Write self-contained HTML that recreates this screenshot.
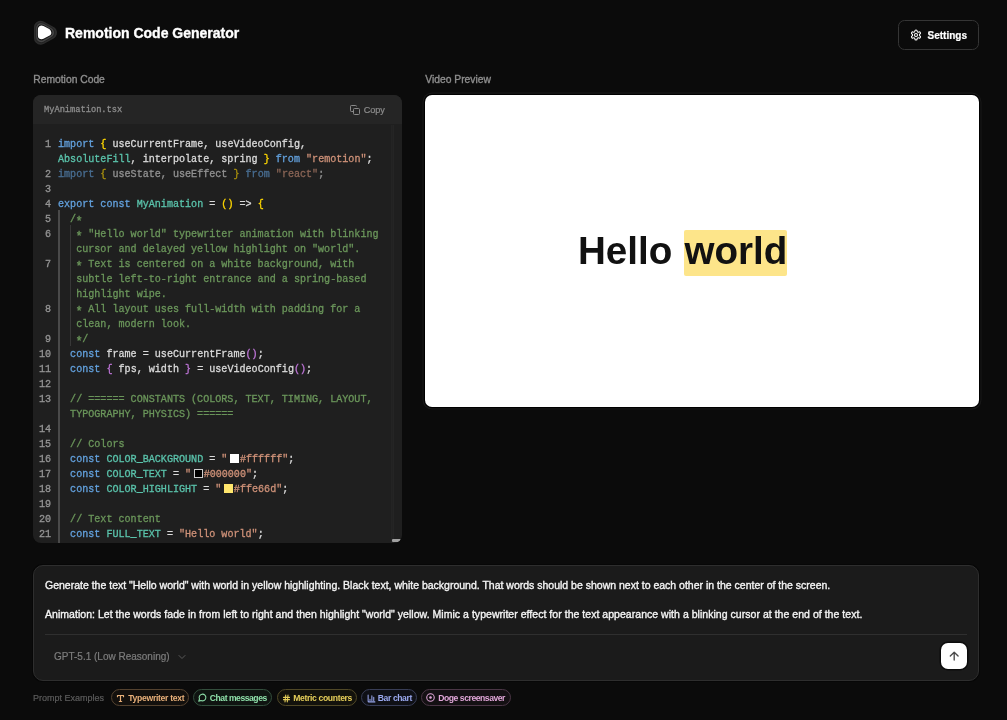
<!DOCTYPE html>
<html><head><meta charset="utf-8">
<style>
*{margin:0;padding:0;box-sizing:border-box}
html,body{width:1007px;height:720px;overflow:hidden;background:#0b0b0b;-webkit-font-smoothing:antialiased;}
body{will-change:transform;font-family:"Liberation Sans",sans-serif;color:#fff}
.abs{position:absolute}
#logo{left:30px;top:16px;width:30px;height:32px}
#title{left:65px;top:23px;font-size:14px;font-weight:bold;color:#fff;-webkit-text-stroke:0.35px #fff;line-height:20px;white-space:nowrap}
#settings{left:898px;top:20px;width:81px;height:30px;border:1.6px solid #353535;border-radius:6.5px;background:#0b0b0b}
#settings span{position:absolute;left:28.5px;top:9.2px;font-size:10px;font-weight:bold;line-height:12px;color:#fff;-webkit-text-stroke:0.2px #fff}
#settings svg{position:absolute;left:10.5px;top:7.5px}
.label{font-size:10.3px;font-weight:normal;color:#8e8e8e;line-height:12px;white-space:nowrap;-webkit-text-stroke:0.35px currentColor}
#code{left:33px;top:95px;width:369px;height:448px;background:#1f1f1f;border-radius:8px;overflow:hidden}
#codehead{position:absolute;left:0;top:0;width:369px;height:29.4px;background:#252525}
#fname{position:absolute;left:11px;top:8.8px;font-family:"Liberation Mono",monospace;font-size:8.7px;color:#8c8c8c;line-height:12px;-webkit-text-stroke:0.3px currentColor}
#copy{position:absolute;left:330.7px;top:8.6px;font-size:9.1px;color:#8c8c8c;-webkit-text-stroke:0.2px currentColor;line-height:12px}
#copy svg{position:absolute;left:-13.5px;top:1.3px}
#scrolltrack{position:absolute;left:358px;top:30px;width:3px;height:418px;background:#222;border-left:1px solid #242424;border-right:1px solid #252525}
#scrollthumb{position:absolute;left:359px;top:444px;width:9px;height:3px;background:#a0a0a0;border-radius:1px}
#lines{position:absolute;left:0;top:41.8px;width:359px;font-family:"Liberation Mono",monospace;font-size:10.08px;line-height:15.03px;color:#dadada}
.tx,.ln{white-space:pre;-webkit-text-stroke:0.3px currentColor}
.r{height:15.03px;position:relative}
.ln{position:absolute;left:0;width:18px;text-align:right;color:#959595}
.tx{position:absolute;left:25px}
.k{color:#62a0dc}.y{color:#ffd700}.p{color:#bd74d6}.t{color:#5ac3ab}.s{color:#ce9178}.c{color:#6a955a}
.dim .tx{opacity:.6}
#lines b{font-weight:normal}
.guide{position:absolute;width:1px;background:#404040}
.ast{display:inline-block;font-style:normal;transform:translateY(2.6px) scale(1.2)}
.sw{display:inline-block;width:9px;height:9px;border:1px solid #111;vertical-align:-1px;margin:0 1px 0 2.5px}
#video{left:425px;top:95px;width:554px;height:312px;background:#fff;border-radius:7px;box-shadow:0 0 0 1.3px #000,0 0 0 2.5px #181818}
#hello{position:absolute;left:0;top:0;width:554px;height:312px;font-size:38.6px;font-weight:bold;color:#111;line-height:44px}
#hw1{position:absolute;left:153px;top:134px}
#hw2{position:absolute;left:258.5px;top:135px;height:46px;width:103px;background:#fde58a;border-radius:2px;padding-left:1px;line-height:42px}
#prompt{left:33px;top:565px;width:946px;height:116px;background:#1b1b1b;border:1.3px solid #2e2e2e;border-radius:10px;box-shadow:0 0 0 1px #070707}
#ptext{position:absolute;left:11px;top:11.5px;font-size:10.5px;line-height:14.5px;color:#f4f4f4;white-space:pre;-webkit-text-stroke:0.35px currentColor}
#sep{position:absolute;left:11px;top:68px;width:922px;height:1px;background:#2f2f2f}
#model{position:absolute;left:20px;top:84px;font-size:10px;color:#7d7d7d;-webkit-text-stroke:0.2px currentColor;line-height:14px;white-space:nowrap}
#send{position:absolute;left:907px;top:76.5px;width:26.4px;height:26.6px;background:#fff;border-radius:7px;box-shadow:0 0 0 1.5px #0c0c0c}
#examples{left:33px;top:689px;height:16px;white-space:nowrap}
#exlabel{position:absolute;left:0;top:2.8px;font-size:9px;color:#5c5c5c;line-height:12px;-webkit-text-stroke:0.2px currentColor}
.chip{position:absolute;top:0;height:17px;border-radius:8.5px;border:1.2px solid;font-size:8.6px;font-weight:bold;line-height:12px}
.chip span{position:absolute;top:2px;white-space:nowrap}
.chip svg{position:absolute}
</style></head>
<body>
<!-- header -->
<svg class="abs" id="logo" width="30" height="32" viewBox="0 0 30 32"><path d="M10.50 11.20L10.50 22.20L20.50 16.70Z" fill="#2d2d2d" stroke="#2d2d2d" stroke-width="13.00" stroke-linejoin="round"/><path d="M11.00 11.80L11.00 21.60L19.60 16.70Z" fill="#232323" stroke="#232323" stroke-width="11.20" stroke-linejoin="round"/><path d="M11.20 12.20L11.20 21.20L19.00 16.70Z" fill="#474747" stroke="#474747" stroke-width="10.00" stroke-linejoin="round"/><path d="M11.40 12.90L11.40 20.10L18.10 16.50Z" fill="#151515" stroke="#151515" stroke-width="8.60" stroke-linejoin="round"/><path d="M11.70 13.40L11.70 19.50L17.40 16.45Z" fill="#ffffff" stroke="#ffffff" stroke-width="7.60" stroke-linejoin="round"/></svg>
<div class="abs" id="title">Remotion Code Generator</div>
<div class="abs" id="settings">
 <svg width="12" height="12" viewBox="0 0 24 24" fill="none" stroke="#fff" stroke-width="2.1" stroke-linecap="round" stroke-linejoin="round"><path d="M12.22 2h-.44a2 2 0 0 0-2 2v.18a2 2 0 0 1-1 1.73l-.43.25a2 2 0 0 1-2 0l-.15-.08a2 2 0 0 0-2.73.73l-.22.38a2 2 0 0 0 .73 2.730l.15.1a2 2 0 0 1 1 1.72v.51a2 2 0 0 1-1 1.74l-.15.09a2 2 0 0 0-.73 2.73l.22.38a2 2 0 0 0 2.73.73l.15-.08a2 2 0 0 1 2 0l.43.25a2 2 0 0 1 1 1.73V20a2 2 0 0 0 2 2h.44a2 2 0 0 0 2-2v-.18a2 2 0 0 1 1-1.73l.43-.25a2 2 0 0 1 2 0l.15.08a2 2 0 0 0 2.73-.73l.22-.39a2 2 0 0 0-.73-2.73l-.15-.08a2 2 0 0 1-1-1.74v-.5a2 2 0 0 1 1-1.740l.15-.09a2 2 0 0 0 .73-2.73l-.22-.38a2 2 0 0 0-2.73-.73l-.15.08a2 2 0 0 1-2 0l-.43-.25a2 2 0 0 1-1-1.73V4a2 2 0 0 0-2-2z"/><circle cx="12" cy="12" r="3"/></svg>
 <span>Settings</span>
</div>
<div class="abs label" style="left:33.3px;top:74.1px">Remotion Code</div>
<div class="abs label" style="left:425.3px;top:74.1px">Video Preview</div>

<!-- code panel -->
<div class="abs" id="code">
 <div id="codehead">
  <div id="fname">MyAnimation.tsx</div>
  <div id="copy"><svg width="10" height="10" viewBox="0 0 10 10" fill="none" stroke="#8a8a8a" stroke-width="1"><rect x="3.5" y="3.5" width="6" height="6" rx="1"/><path d="M6.5 1.5 V1.2 a0.8 0.8 0 0 0 -0.8 -0.7 H1.3 a0.8 0.8 0 0 0 -0.8 0.8 V5.7 a0.8 0.8 0 0 0 0.8 0.8 H3.5"/></svg>Copy</div>
 </div>
 <div id="scrolltrack"></div>
 <div id="scrollthumb"></div>
 <div id="lines">
  <div class="guide" style="left:25px;top:73px;height:340px;width:1.5px;background:#4a4a4a"></div>
  <div class="guide" style="left:37px;top:88px;height:121px;background:#383838"></div>
  <div class="r"><b class="ln">1</b><span class="tx"><b class="k">import</b> <b class="y">{</b> useCurrentFrame, useVideoConfig,</span></div>
  <div class="r"><span class="tx"><b class="t">AbsoluteFill</b>, interpolate, spring <b class="y">}</b> <b class="k">from</b> <b class="s">&quot;remotion&quot;</b>;</span></div>
  <div class="r dim"><b class="ln">2</b><span class="tx"><b class="k">import</b> <b class="y">{</b> useState, useEffect <b class="y">}</b> <b class="k">from</b> <b class="s">&quot;react&quot;</b>;</span></div>
  <div class="r"><b class="ln">3</b><span class="tx"></span></div>
  <div class="r"><b class="ln">4</b><span class="tx"><b class="k">export</b> <b class="k">const</b> <b class="t">MyAnimation</b> = <b class="y">()</b> =&gt; <b class="y">{</b></span></div>
  <div class="r"><b class="ln">5</b><span class="tx">  <b class="c">/<i class="ast">*</i></b></span></div>
  <div class="r"><b class="ln">6</b><span class="tx">   <b class="c"><i class="ast">*</i> &quot;Hello world&quot; typewriter animation with blinking</b></span></div>
  <div class="r"><span class="tx">   <b class="c">cursor and delayed yellow highlight on &quot;world&quot;.</b></span></div>
  <div class="r"><b class="ln">7</b><span class="tx">   <b class="c"><i class="ast">*</i> Text is centered on a white background, with</b></span></div>
  <div class="r"><span class="tx">   <b class="c">subtle left-to-right entrance and a spring-based</b></span></div>
  <div class="r"><span class="tx">   <b class="c">highlight wipe.</b></span></div>
  <div class="r"><b class="ln">8</b><span class="tx">   <b class="c"><i class="ast">*</i> All layout uses full-width with padding for a</b></span></div>
  <div class="r"><span class="tx">   <b class="c">clean, modern look.</b></span></div>
  <div class="r"><b class="ln">9</b><span class="tx">   <b class="c"><i class="ast">*</i>/</b></span></div>
  <div class="r"><b class="ln">10</b><span class="tx">  <b class="k">const</b> frame = useCurrentFrame<b class="p">()</b>;</span></div>
  <div class="r"><b class="ln">11</b><span class="tx">  <b class="k">const</b> <b class="p">{</b> fps, width <b class="p">}</b> = useVideoConfig<b class="p">()</b>;</span></div>
  <div class="r"><b class="ln">12</b><span class="tx"></span></div>
  <div class="r"><b class="ln">13</b><span class="tx">  <b class="c">// ====== CONSTANTS (COLORS, TEXT, TIMING, LAYOUT,</b></span></div>
  <div class="r"><span class="tx">  <b class="c">TYPOGRAPHY, PHYSICS) ======</b></span></div>
  <div class="r"><b class="ln">14</b><span class="tx"></span></div>
  <div class="r"><b class="ln">15</b><span class="tx">  <b class="c">// Colors</b></span></div>
  <div class="r"><b class="ln">16</b><span class="tx">  <b class="k">const</b> <b class="t">COLOR_BACKGROUND</b> = <b class="s">&quot;</b><i class="sw" style="background:#ffffff;border-color:#ffffff"></i><b class="s">#ffffff&quot;</b>;</span></div>
  <div class="r"><b class="ln">17</b><span class="tx">  <b class="k">const</b> <b class="t">COLOR_TEXT</b> = <b class="s">&quot;</b><i class="sw" style="background:#000000;border-color:#d0d0d0"></i><b class="s">#000000&quot;</b>;</span></div>
  <div class="r"><b class="ln">18</b><span class="tx">  <b class="k">const</b> <b class="t">COLOR_HIGHLIGHT</b> = <b class="s">&quot;</b><i class="sw" style="background:#ffe66d;border-color:#ffe66d"></i><b class="s">#ffe66d&quot;</b>;</span></div>
  <div class="r"><b class="ln">19</b><span class="tx"></span></div>
  <div class="r"><b class="ln">20</b><span class="tx">  <b class="c">// Text content</b></span></div>
  <div class="r"><b class="ln">21</b><span class="tx">  <b class="k">const</b> <b class="t">FULL_TEXT</b> = <b class="s">&quot;Hello world&quot;</b>;</span></div>
 </div>
</div>

<!-- video -->
<div class="abs" id="video">
 <div id="hello"><span id="hw1">Hello</span><span id="hw2">world</span></div>
</div>

<!-- prompt -->
<div class="abs" id="prompt">
 <div id="ptext">Generate the text "Hello world" with world in yellow highlighting. Black text, white background. That words should be shown next to each other in the center of the screen.

<span style="letter-spacing:0.035px">Animation: Let the words fade in from left to right and then highlight "world" yellow. Mimic a typewriter effect for the text appearance with a blinking cursor at the end of the text.</span></div>
 <div id="sep"></div>
 <div id="model">GPT-5.1 (Low Reasoning)<svg style="position:absolute;left:124px;top:4px" width="8" height="6" viewBox="0 0 8 6" fill="none" stroke="#5a5a5a" stroke-width="1" stroke-linecap="round"><path d="M1 1.5l3 3 3-3"/></svg></div>
 <div id="send"><svg width="26" height="26" viewBox="0 0 26 26" fill="none" stroke="#4a4a4a" stroke-width="1.35" stroke-linecap="round" stroke-linejoin="round"><path d="M13.2 17.1V9.6M9.3 13.1L13.2 9.2l3.9 3.9"/></svg></div>
</div>

<div class="abs" id="examples">
 <div id="exlabel">Prompt Examples</div>
 <div class="chip" style="left:77.5px;width:78.5px;color:#e8b07a;border-color:#54422f;background:#13100d"><svg style="left:4.5px;top:3.7px" width="9" height="9" viewBox="0 0 24 24" fill="none" stroke="#e8b07a" stroke-width="3.2" stroke-linecap="round" stroke-linejoin="round"><path d="M4 7V4h16v3M9 20h6M12 4v16"/></svg><span style="left:16.8px;letter-spacing:-0.303px">Typewriter text</span></div>
 <div class="chip" style="left:160px;width:79px;color:#8fe0aa;border-color:#334e3c;background:#0f1411"><svg style="left:4px;top:3.2px" width="9" height="9" viewBox="0 0 24 24" fill="none" stroke="#8fe0aa" stroke-width="2.8" stroke-linecap="round" stroke-linejoin="round"><path d="M7.9 20A9 9 0 1 0 4 16.1L2 22Z"/></svg><span style="left:15.8px;letter-spacing:-0.467px">Chat messages</span></div>
 <div class="chip" style="left:243.5px;width:80.5px;color:#e6cf5a;border-color:#504826;background:#13120c"><svg style="left:4.6px;top:4px" width="9" height="9" viewBox="0 0 24 24" fill="none" stroke="#e6cf5a" stroke-width="2.8" stroke-linecap="round" stroke-linejoin="round"><path d="M4 9h16M4 15h16M10 3 8 21M16 3l-2 18"/></svg><span style="left:15.8px;letter-spacing:-0.353px">Metric counters</span></div>
 <div class="chip" style="left:328px;width:56px;color:#9aa8ee;border-color:#383d56;background:#0f1016"><svg style="left:4.5px;top:3.9px" width="9" height="9" viewBox="0 0 24 24" fill="none" stroke="#9aa8ee" stroke-width="2.8" stroke-linecap="round" stroke-linejoin="round"><path d="M3 3v16a2 2 0 0 0 2 2h16M18 17V9M13 17V5M8 17v-3"/></svg><span style="left:15.8px;letter-spacing:-0.407px">Bar chart</span></div>
 <div class="chip" style="left:388px;width:90px;color:#e0a6d8;border-color:#4b3646;background:#141013"><svg style="left:4.2px;top:3.2px" width="9" height="9" viewBox="0 0 24 24" fill="none" stroke="#e0a6d8" stroke-width="2.8" stroke-linecap="round" stroke-linejoin="round"><circle cx="12" cy="12" r="10"/><circle cx="12" cy="12" r="2.2" fill="#e0a6d8"/></svg><span style="left:16.3px;letter-spacing:-0.46px">Doge screensaver</span></div>
</div>
</body></html>
